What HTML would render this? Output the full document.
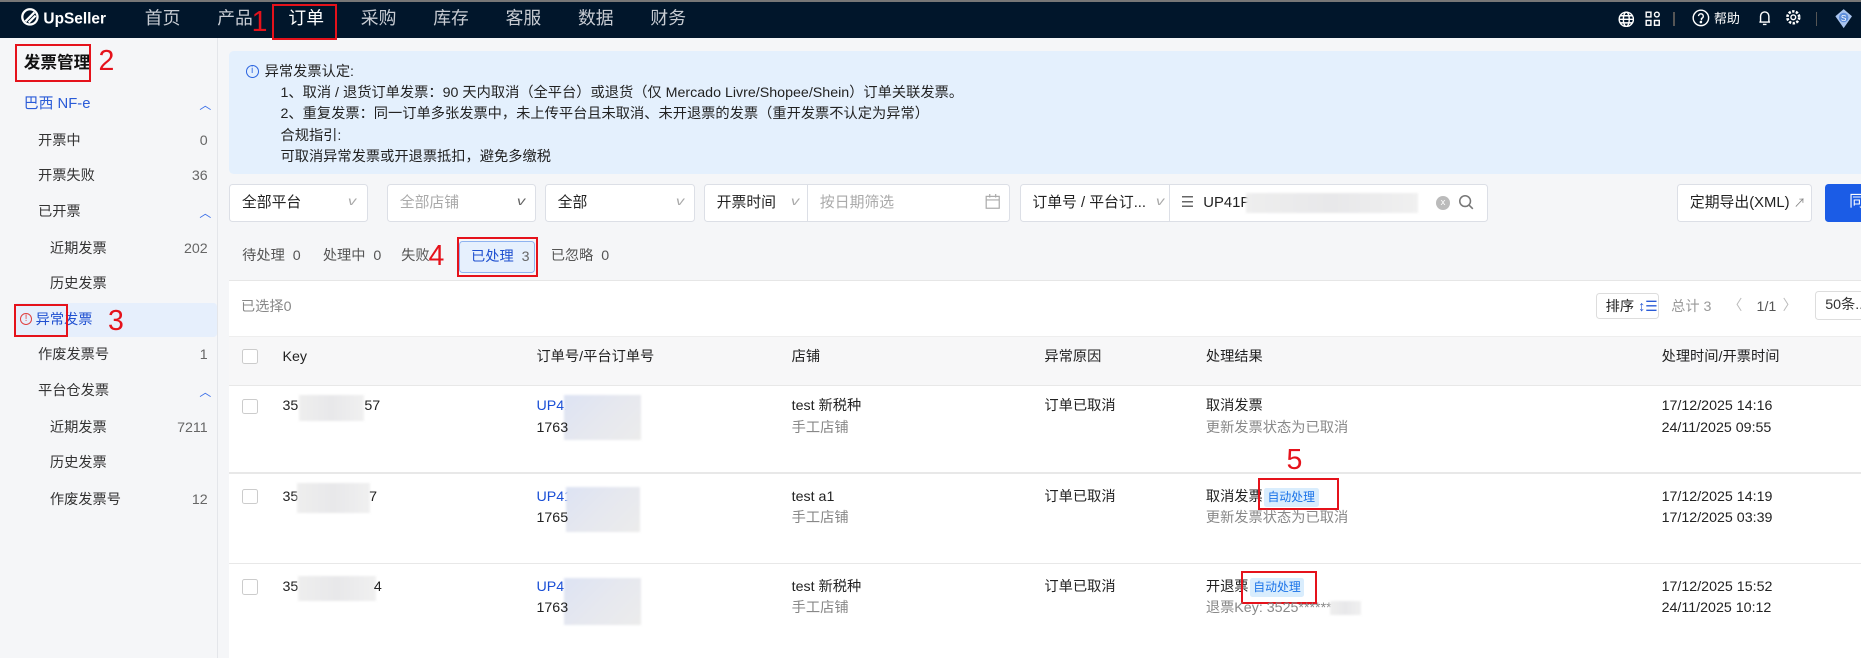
<!DOCTYPE html>
<html><head><meta charset="utf-8">
<style>
*{box-sizing:border-box;margin:0;padding:0}
html,body{width:1861px;height:658px;overflow:hidden;background:#f5f6f8}
#w{zoom:1.18686;width:1568px;height:555px;position:relative;font-family:"Liberation Sans","Noto Sans CJK SC",sans-serif;font-size:12px;color:#222;overflow:hidden}
.a{position:absolute;white-space:nowrap;line-height:17px}
.nav{left:0;top:0;width:1568px;height:32px;background:#01162b;border-top:2px solid #777}
.nv{color:#c8ccd3;font-size:15px;top:6px;line-height:20px}
.rb{position:absolute;border:2px solid #e5121b}
.rn{position:absolute;color:#e5121b;font-size:24px;font-family:"Liberation Sans",sans-serif;line-height:1}
.side{left:0;top:32px;width:184px;height:523px;background:#f5f6f8;border-right:1px solid #e4e6ea}
.si{font-size:12px;color:#333}
.cnt{font-size:12px;color:#666;text-align:right;width:40px}
.chev{color:#3a6ee8;font-size:10px}
.sel{position:absolute;top:155px;height:32px;background:#fff;border:1px solid #dcdfe6;border-radius:3px}
.sel span{position:absolute;left:10px;top:7px;font-size:12.5px;line-height:17px}
.dd{position:absolute;right:10px;top:8px;color:#aaa;font-size:10px;transform:scaleX(1.4)}
.gray{color:#aaa}
.blur{position:absolute;background:linear-gradient(90deg,#eee,#e8e8ea,#f0f0f0);filter:blur(1px)}
.blurb{position:absolute;background:linear-gradient(135deg,#dde3f3,#e6e8ef,#ececec);filter:blur(1px)}
.tag{position:absolute;background:#d9edfd;color:#1a73e8;font-size:10px;padding:1px 3px;border-radius:2px;line-height:14px}
.hl{height:1px;background:#e8e8e8;left:193px;width:1375px}
.cb{position:absolute;width:13px;height:13px;border:1px solid #ccc;border-radius:2px;background:#fff}
.t{font-size:12px;color:#222}
.sub{font-size:12px;color:#888}
.blue{color:#1a4fd6}
</style></head><body><div id="w">
<div class="a nav"></div>
<div class="a" style="left:18px;top:7px;color:#fff;font-size:13px;font-weight:bold">
<svg width="15" height="15" viewBox="0 0 14 14" style="vertical-align:-2px"><circle cx="7" cy="7" r="6" fill="none" stroke="#fff" stroke-width="1.8"/><path d="M3.5 10.5 L10.5 3.5 M6 11.5 L11.5 6" stroke="#fff" stroke-width="1.8"/></svg> UpSeller</div>
<div class="a nv" style="left:122px">首页</div>
<div class="a nv" style="left:183px">产品</div>
<div class="a nv" style="left:243px;color:#fff">订单</div>
<div class="a nv" style="left:304px">采购</div>
<div class="a nv" style="left:365px">库存</div>
<div class="a nv" style="left:426px">客服</div>
<div class="a nv" style="left:487px">数据</div>
<div class="a nv" style="left:548px">财务</div>
<div class="rb" style="left:229px;top:3px;width:55px;height:31px"></div>
<div class="rn" style="left:212px;top:7px">1</div>
<svg class="a" style="left:1363px;top:9px" width="14" height="14" viewBox="0 0 14 14" fill="none" stroke="#fff" stroke-width="1.2"><circle cx="7" cy="7" r="6"/><ellipse cx="7" cy="7" rx="2.5" ry="6"/><path d="M1 7h12M2 4h10M2 10h10"/></svg>
<svg class="a" style="left:1386px;top:9px" width="13" height="13" viewBox="0 0 13 13" fill="none" stroke="#fff" stroke-width="1.2"><rect x="1" y="1" width="4" height="4"/><rect x="8" y="1" width="4" height="4" rx="2"/><rect x="1" y="8" width="4" height="4"/><rect x="8" y="8" width="4" height="4"/></svg>
<div class="a" style="left:1410px;top:10px;width:1px;height:12px;background:#555"></div>
<svg class="a" style="left:1426px;top:8px" width="15" height="15" viewBox="0 0 15 15" fill="none" stroke="#fff" stroke-width="1.2"><circle cx="7.5" cy="7.5" r="6.5"/><path d="M5.5 6a2 2 0 1 1 2.5 2v1.5"/><circle cx="7.5" cy="11" r=".5" fill="#fff"/></svg>
<div class="a" style="left:1444px;top:8px;color:#fff;font-size:11px">帮助</div>
<svg class="a" style="left:1480px;top:8px" width="13" height="15" viewBox="0 0 13 15" fill="none" stroke="#fff" stroke-width="1.2"><path d="M3 11V6a3.5 3.5 0 0 1 7 0v5H2h9M5 13h3"/></svg>
<svg class="a" style="left:1504px;top:8px" width="14" height="14" viewBox="0 0 14 14" fill="none" stroke="#fff" stroke-width="1.2"><circle cx="7" cy="7" r="2"/><circle cx="7" cy="7" r="5" stroke-dasharray="2 1.2" stroke-width="2.2"/></svg>
<div class="a" style="left:1530px;top:10px;width:1px;height:12px;background:#555"></div>
<svg class="a" style="left:1544px;top:7px" width="18" height="18" viewBox="0 0 18 18"><path d="M9 1l7 6-7 10-7-10z" fill="#a9c4ee"/><circle cx="9" cy="8" r="4" fill="#5f8fdc"/><text x="9" y="11" font-size="7" fill="#fff" text-anchor="middle" font-family="Liberation Sans">S</text></svg>

<div class="a side"></div>
<div class="a" style="left:20px;top:45px;font-size:14px;font-weight:bold;color:#111">发票管理</div>
<div class="rb" style="left:13px;top:37px;width:64px;height:32px"></div>
<div class="rn" style="left:83px;top:40px">2</div>
<div class="a" style="left:20px;top:79px;font-size:12.5px;color:#2a5bd7">巴西 NF-e</div>
<div class="a chev" style="left:168px;top:80px">︿</div>
<div class="a si" style="left:32px;top:110px">开票中</div><div class="a cnt" style="left:135px;top:110px">0</div>
<div class="a si" style="left:32px;top:140px">开票失败</div><div class="a cnt" style="left:135px;top:140px">36</div>
<div class="a si" style="left:32px;top:170px">已开票</div><div class="a chev" style="left:168px;top:171px">︿</div>
<div class="a si" style="left:42px;top:201px">近期发票</div><div class="a cnt" style="left:135px;top:201px">202</div>
<div class="a si" style="left:42px;top:231px">历史发票</div>
<div class="a" style="left:12px;top:255px;width:171px;height:29px;background:#e6effc;border-radius:3px"></div>
<div class="a" style="left:17px;top:264px;width:10px;height:10px;border:1px solid #e04040;border-radius:50%;color:#e04040;font-size:8px;line-height:8px;text-align:center">!</div>
<div class="a" style="left:30px;top:261px;color:#1f50d0;font-size:12px">异常发票</div>
<div class="rb" style="left:12px;top:256px;width:45px;height:28px"></div>
<div class="rn" style="left:91px;top:259px">3</div>
<div class="a si" style="left:32px;top:291px">作废发票号</div><div class="a cnt" style="left:135px;top:291px">1</div>
<div class="a si" style="left:32px;top:321px">平台仓发票</div><div class="a chev" style="left:168px;top:322px">︿</div>
<div class="a si" style="left:42px;top:352px">近期发票</div><div class="a cnt" style="left:135px;top:352px">7211</div>
<div class="a si" style="left:42px;top:382px">历史发票</div>
<div class="a si" style="left:42px;top:413px">作废发票号</div><div class="a cnt" style="left:135px;top:413px">12</div>

<div class="a" style="left:193px;top:43px;width:1375px;height:104px;background:#e4f0fd;border-radius:4px 0 0 4px"></div>
<div class="a" style="left:207px;top:55px;width:11px;height:11px;border:1px solid #2a64e0;border-radius:50%;color:#2a64e0;font-size:8px;line-height:9px;text-align:center">i</div>
<div class="a" style="left:223px;top:52px;font-size:12px;line-height:18px;color:#222">异常发票认定:<br>&nbsp;&nbsp;&nbsp;&nbsp;1、取消 / 退货订单发票：90 天内取消（全平台）或退货（仅 Mercado Livre/Shopee/Shein）订单关联发票。<br>&nbsp;&nbsp;&nbsp;&nbsp;2、重复发票：同一订单多张发票中，未上传平台且未取消、未开退票的发票（重开发票不认定为异常）<br>&nbsp;&nbsp;&nbsp;&nbsp;合规指引:<br>&nbsp;&nbsp;&nbsp;&nbsp;可取消异常发票或开退票抵扣，避免多缴税</div>

<div class="sel" style="left:193px;width:117px"><span>全部平台</span><i class="dd">v</i></div>
<div class="sel" style="left:326px;width:126px"><span class="gray">全部店铺</span><i class="dd" style="color:#666">v</i></div>
<div class="sel" style="left:459px;width:127px"><span>全部</span><i class="dd">v</i></div>
<div class="sel" style="left:593px;width:258px"><span>开票时间</span><i class="dd" style="right:178px">v</i>
<div class="a" style="left:86px;top:0;width:1px;height:30px;background:#dcdfe6"></div><span class="gray" style="left:97px">按日期筛选</span>
<svg class="a" style="left:236px;top:8px" width="13" height="13" viewBox="0 0 13 13" fill="none" stroke="#aaa"><rect x="1" y="2" width="11" height="10"/><path d="M1 5h11M4 0v3M9 0v3"/></svg></div>
<div class="sel" style="left:859px;width:395px"><span>订单号 / 平台订...</span><i class="dd" style="right:273px">v</i>
<div class="a" style="left:125px;top:0;width:1px;height:30px;background:#dcdfe6"></div>
<span style="left:135px;color:#666">☰</span><span style="left:154px">UP41P</span>
<div class="blur" style="left:190px;top:7px;width:145px;height:17px"></div>
<div class="a" style="left:350px;top:9px;width:12px;height:12px;border-radius:50%;background:#bbb;color:#fff;font-size:8px;line-height:12px;text-align:center">x</div>
<svg class="a" style="left:369px;top:8px" width="14" height="14" viewBox="0 0 14 14" fill="none" stroke="#777" stroke-width="1.3"><circle cx="6" cy="6" r="4.5"/><path d="M9.5 9.5l3 3"/></svg></div>
<div class="sel" style="left:1413px;width:114px"><span>定期导出(XML) <span style="position:static;color:#888;font-size:10px">↗</span></span></div>
<div class="a" style="left:1538px;top:155px;width:40px;height:32px;background:#1b5ce6;border-radius:3px;color:#fff;font-size:13px;padding:7px 0 0 20px">同</div>

<div class="a" style="left:204px;top:207px;color:#555">待处理 &nbsp;0</div>
<div class="a" style="left:272px;top:207px;color:#555">处理中 &nbsp;0</div>
<div class="a" style="left:338px;top:207px;color:#555">失败</div>
<div class="rn" style="left:361px;top:204px">4</div>
<div class="a" style="left:387px;top:203px;width:64px;height:27px;background:#e6f0fd;border:1px solid #8fb3f0;border-radius:3px;color:#1f50d0;padding:4px 0 0 9px">已处理 &nbsp;<span style="color:#666">3</span></div>
<div class="rb" style="left:385px;top:200px;width:68px;height:33px"></div>
<div class="a" style="left:464px;top:207px;color:#555">已忽略 &nbsp;0</div>

<div class="a" style="left:193px;top:236px;width:1375px;height:319px;background:#fff;border-top:1px solid #e6e6e6"></div>
<div class="a" style="left:203px;top:250px;color:#888">已选择0</div>
<div class="a" style="left:1345px;top:247px;width:53px;height:22px;border:1px solid #ddd;border-radius:3px;padding:2px 0 0 7px">排序 <span style="color:#2a5bd7">↕☰</span></div>
<div class="a" style="left:1408px;top:250px;color:#999">总计 3</div>
<div class="a" style="left:1456px;top:249px;color:#bbb">〈</div>
<div class="a" style="left:1480px;top:250px;color:#555">1/1</div>
<div class="a" style="left:1502px;top:249px;color:#bbb">〉</div>
<div class="a" style="left:1529px;top:245px;width:50px;height:25px;border:1px solid #ddd;border-radius:3px;padding:3px 0 0 8px;color:#333">50条...</div>
<div class="a" style="left:193px;top:283px;width:1375px;height:42px;background:#f7f7f8;border-top:1px solid #eee;border-bottom:1px solid #e8e8e8"></div>
<div class="cb" style="left:204px;top:294px"></div>
<div class="a t" style="left:238px;top:292px">Key</div>
<div class="a t" style="left:452px;top:292px">订单号/平台订单号</div>
<div class="a t" style="left:667px;top:292px">店铺</div>
<div class="a t" style="left:880px;top:292px">异常原因</div>
<div class="a t" style="left:1016px;top:292px">处理结果</div>
<div class="a t" style="left:1400px;top:292px">处理时间/开票时间</div>

<div class="cb" style="left:204px;top:336px"></div>
<div class="a t" style="left:238px;top:334px">35</div><div class="blur" style="left:252px;top:333px;width:55px;height:22px"></div><div class="a t" style="left:307px;top:334px">57</div>
<div class="a t blue" style="left:452px;top:334px">UP41</div><div class="blurb" style="left:475px;top:333px;width:65px;height:38px"></div>
<div class="a t" style="left:452px;top:352px">1763</div>
<div class="a t" style="left:667px;top:334px">test 新税种</div><div class="a sub" style="left:667px;top:352px">手工店铺</div>
<div class="a t" style="left:880px;top:334px">订单已取消</div>
<div class="a t" style="left:1016px;top:334px">取消发票</div><div class="a sub" style="left:1016px;top:352px">更新发票状态为已取消</div>
<div class="a t" style="left:1400px;top:334px">17/12/2025 14:16</div><div class="a t" style="left:1400px;top:352px">24/11/2025 09:55</div>
<div class="a hl" style="top:398px"></div>
<div class="cb" style="left:204px;top:412px"></div>
<div class="a t" style="left:238px;top:410px">35</div><div class="blur" style="left:250px;top:407px;width:62px;height:25px"></div><div class="a t" style="left:311px;top:410px">7</div>
<div class="a t blue" style="left:452px;top:410px">UP41</div><div class="blurb" style="left:477px;top:410px;width:62px;height:38px"></div>
<div class="a t" style="left:452px;top:428px">1765</div>
<div class="a t" style="left:667px;top:410px">test a1</div><div class="a sub" style="left:667px;top:428px">手工店铺</div>
<div class="a t" style="left:880px;top:410px">订单已取消</div>
<div class="a t" style="left:1016px;top:410px">取消发票</div><div class="tag" style="left:1065px;top:411px">自动处理</div>
<div class="rb" style="left:1060px;top:403px;width:68px;height:27px"></div>
<div class="rn" style="left:1084px;top:376px">5</div>
<div class="a sub" style="left:1016px;top:428px">更新发票状态为已取消</div>
<div class="a t" style="left:1400px;top:410px">17/12/2025 14:19</div><div class="a t" style="left:1400px;top:428px">17/12/2025 03:39</div>
<div class="a hl" style="top:474px"></div>
<div class="cb" style="left:204px;top:488px"></div>
<div class="a t" style="left:238px;top:486px">35</div><div class="blur" style="left:251px;top:485px;width:66px;height:21px"></div><div class="a t" style="left:315px;top:486px">4</div>
<div class="a t blue" style="left:452px;top:486px">UP4</div><div class="blurb" style="left:475px;top:487px;width:65px;height:40px"></div>
<div class="a t" style="left:452px;top:504px">1763</div>
<div class="a t" style="left:667px;top:486px">test 新税种</div><div class="a sub" style="left:667px;top:504px">手工店铺</div>
<div class="a t" style="left:880px;top:486px">订单已取消</div>
<div class="a t" style="left:1016px;top:486px">开退票</div><div class="tag" style="left:1053px;top:487px">自动处理</div>
<div class="rb" style="left:1046px;top:481px;width:64px;height:28px"></div>
<div class="a sub" style="left:1016px;top:504px">退票Key: 3525******</div><div class="blur" style="left:1121px;top:506px;width:26px;height:12px"></div>
<div class="a t" style="left:1400px;top:486px">17/12/2025 15:52</div><div class="a t" style="left:1400px;top:504px">24/11/2025 10:12</div>
</div></body></html>
